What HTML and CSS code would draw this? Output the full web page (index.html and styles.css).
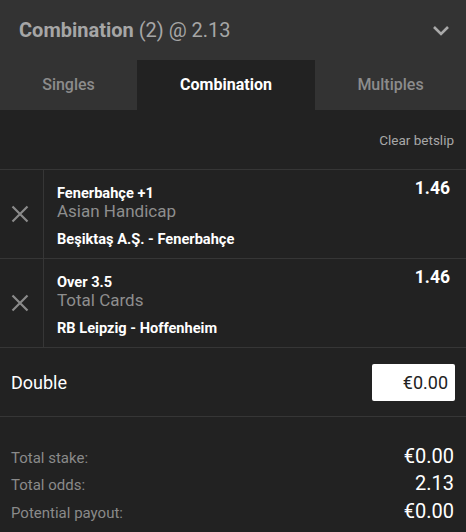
FILE: index.html
```html
<!DOCTYPE html>
<html>
<head>
<meta charset="utf-8">
<link rel="stylesheet" href="styles.css">
</head>
<body>
<div class="slip">
  <header class="head">
    <div class="title"><b>Combination</b> (2) @ 2.13</div>
    <svg class="chev" width="18" height="11" viewBox="0 0 18 11"><path d="M2 2 L9 9 L16 2" fill="none" stroke="#a9a9a9" stroke-width="2.6"/></svg>
  </header>
  <nav class="tabs">
    <div class="tab">Singles</div>
    <div class="tab active">Combination</div>
    <div class="tab">Multiples</div>
  </nav>
  <div class="clear-row"><span class="clear">Clear betslip</span></div>
  <div class="sel">
    <div class="rm"><svg width="18" height="18" viewBox="0 0 18 18"><path d="M1.5 1.5 L16.5 16.5 M16.5 1.5 L1.5 16.5" stroke="#8a8a8a" stroke-width="2.2"/></svg></div>
    <div class="info">
      <div class="top"><span class="pick">Fenerbahçe +1</span><span class="odds">1.46</span></div>
      <div class="market">Asian Handicap</div>
      <div class="event">Beşiktaş A.Ş. - Fenerbahçe</div>
    </div>
  </div>
  <div class="sel">
    <div class="rm"><svg width="18" height="18" viewBox="0 0 18 18"><path d="M1.5 1.5 L16.5 16.5 M16.5 1.5 L1.5 16.5" stroke="#8a8a8a" stroke-width="2.2"/></svg></div>
    <div class="info">
      <div class="top"><span class="pick">Over 3.5</span><span class="odds">1.46</span></div>
      <div class="market">Total Cards</div>
      <div class="event">RB Leipzig - Hoffenheim</div>
    </div>
  </div>
  <div class="stake">
    <span class="stake-label">Double</span>
    <div class="input">€0.00</div>
  </div>
  <div class="totals">
    <div class="trow"><span class="tl">Total stake:</span><span class="tv">€0.00</span></div>
    <div class="trow"><span class="tl">Total odds:</span><span class="tv">2.13</span></div>
    <div class="trow"><span class="tl">Potential payout:</span><span class="tv">€0.00</span></div>
  </div>
</div>
</body>
</html>
```
FILE: styles.css
```css
* { box-sizing: border-box; }
html, body { margin: 0; padding: 0; background: #222222; }
body { font-family: Roboto, "Noto Sans", sans-serif; width: 466px; height: 532px; overflow: hidden; }
.slip { display: flex; flex-direction: column; }
.head {
  height: 60px; background: #333333; display: flex; align-items: center;
  justify-content: space-between; padding: 0 16px 0 19px;
}
.title { font-size: 20px; color: #a6a6a6; line-height: 24px; }
.title b { font-weight: 700; }
.tabs { display: grid; grid-template-columns: 137px 178px 1fr; height: 50px; background: #333333; }
.tab { display: flex; align-items: center; justify-content: center; font-size: 16px; font-weight: 500; color: #8c8c8c; padding-bottom: 2px; }
.tab.active { background: #222222; color: #ffffff; font-weight: 700; }
.clear-row { height: 60px; display: flex; justify-content: flex-end; align-items: center; padding: 0 12px 0 0; border-bottom: 1px solid #363636; }
.clear { font-size: 13.5px; color: #a8a8a8; }
.sel { display: flex; height: 89px; border-bottom: 1px solid #363636; }
.rm { width: 44px; border-right: 1px solid #363636; display: flex; align-items: center; justify-content: center; padding-right: 3px; }
.info { flex: 1; padding: 8px 16px 0 13px; }
.top { display: flex; justify-content: space-between; align-items: flex-start; height: 20px; }
.pick { font-size: 14.6px; font-weight: 700; color: #ffffff; margin-top: 6px; line-height: 18px; }
.odds { font-size: 17.5px; font-weight: 700; color: #ffffff; line-height: 20px; }
.market { font-size: 17px; color: #8e8e8e; line-height: 20px; margin-top: 3px; }
.event { font-size: 14.6px; font-weight: 700; color: #ffffff; line-height: 18px; margin-top: 9px; }
.stake { height: 69px; display: flex; align-items: center; justify-content: space-between; padding: 0 11px; border-bottom: 1px solid #363636; }
.stake-label { font-size: 18px; color: #ffffff; font-weight: 400; }
.input { width: 83px; height: 37px; background: #ffffff; border-radius: 2px; color: #222222; font-size: 18px; display: flex; align-items: center; justify-content: flex-end; padding-right: 7px; }
.totals { padding: 27px 12px 0 11px; display: flex; flex-direction: column; }
.trow { display: flex; justify-content: space-between; align-items: baseline; height: 27.3px; }
.tl { font-size: 15px; color: #8a8a8a; }
.tv { font-size: 20px; color: #ffffff; }
```
